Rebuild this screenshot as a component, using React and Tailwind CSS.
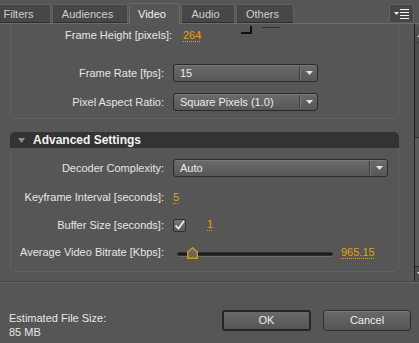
import React from 'react';

const Arrow = ({ className = '' }) => (
  <svg width="7" height="4" viewBox="0 0 7 4" className={className}>
    <polygon points="0,0 7,0 3.5,4" fill="#e4e4e4" />
  </svg>
);

const Tab = ({ label, active, w, className = '' }) => (
  <div
    className={`${w} ${className} flex items-center justify-center pr-[5px] rounded-t-[2px] border border-b-0 ${
      active
        ? 'h-[21px] -mb-px bg-[#565656] border-[#6c6c6c] text-[#f2f2f2]'
        : 'h-[19px] bg-[#474747] border-[#626262] text-[#cfcfcf] shadow-[inset_0_-1px_0_#2e2e2e]'
    }`}
  >
    {label}
  </div>
);

const Select = ({ value, w }) => (
  <div className={`${w} h-[18px] flex items-center rounded-[3px] border border-[#2a2a2a] bg-linear-to-b from-[#6b6b6b] to-[#575757] shadow-[inset_0_1px_0_#787878]`}>
    <span className="flex-1 pl-[6px] text-[#ececec]">{value}</span>
    <div className="w-[2px] h-[14px] border-l border-[#3e3e3e] border-r border-r-[#767676]" />
    <div className="w-[16px] flex justify-center">
      <Arrow />
    </div>
  </div>
);

const Row = ({ label, children }) => (
  <div className="flex items-center h-[18px]">
    <div className="w-[153px] shrink-0 text-right">{label}</div>
    <div className="ml-[9px] flex items-center">{children}</div>
  </div>
);

const Value = ({ children, className = '' }) => (
  <span className={`text-[#e2a20f] underline decoration-dotted underline-offset-[2px] ${className}`}>{children}</span>
);

export default function App() {
  return (
    <div className="w-[419px] h-[343px] overflow-hidden bg-[#565656] flex flex-col text-[11px] leading-none text-[#e6e6e6] font-[family-name:'Liberation_Sans',Arial,sans-serif]">
      {/* Tab bar */}
      <div className="h-[24px] shrink-0 flex items-end gap-[1px] border-b border-[#6c6c6c]">
        <Tab label="Filters" w="w-[60px]" className="-ml-[9px]" />
        <Tab label="Audiences" w="w-[76px]" />
        <Tab label="Video" w="w-[51px]" active />
        <Tab label="Audio" w="w-[54px]" />
        <Tab label="Others" w="w-[58px]" />
        <div className="ml-auto mr-[5px] mb-[1px] w-[25px] h-[18px] flex items-center justify-center gap-[1px] rounded-t-[2px] border border-b-0 border-[#626262] bg-[#474747]">
          <svg width="15" height="10" viewBox="0 0 15 10">
            <polygon points="0,3 5,3 2.5,6" fill="#f0f0f0" />
            <rect x="6" y="0" width="9" height="1" fill="#f0f0f0" />
            <rect x="6" y="3" width="9" height="1" fill="#f0f0f0" />
            <rect x="6" y="6" width="9" height="1" fill="#f0f0f0" />
            <rect x="6" y="9" width="9" height="1" fill="#f0f0f0" />
          </svg>
        </div>
      </div>

      {/* Content */}
      <div className="h-[258px] shrink-0 flex border-b border-[#484848]">
        <div className="w-[414px] shrink-0 pl-[10px] pr-[15px] flex flex-col">
          {/* Clipped first group */}
          <div className="border-x border-b border-[#5f5f5f] rounded-b-[5px] pt-[2px] pb-[7px] flex flex-col">
            <div className="flex items-center h-[18px]">
              <div className="w-[161px] shrink-0 text-right">Frame Height [pixels]:</div>
              <Value className="ml-[11px]">264</Value>
              <svg width="40" height="18" viewBox="0 0 40 18" className="ml-[40px] self-start">
                <path d="M0 7 H10 V0" stroke="#111" strokeWidth="2" fill="none" />
                <rect x="21" y="1" width="18" height="1" fill="#303030" />
              </svg>
            </div>
            <div className="mt-[20px]">
              <Row label="Frame Rate [fps]:">
                <Select value="15" w="w-[145px]" />
              </Row>
            </div>
            <div className="mt-[11px]">
              <Row label="Pixel Aspect Ratio:">
                <Select value="Square Pixels (1.0)" w="w-[145px]" />
              </Row>
            </div>
          </div>

          {/* Advanced Settings */}
          <div className="mt-[13px] flex flex-col">
            <div className="h-[16px] bg-[#333333] rounded-t-[5px] flex items-center pl-[8px]">
              <svg width="7" height="5" viewBox="0 0 7 5">
                <polygon points="0,0 7,0 3.5,5" fill="#8e8e8e" />
              </svg>
              <span className="ml-[8px] text-[12px] font-bold text-[#f2f2f2]">Advanced Settings</span>
            </div>
            <div className="border-x border-b border-[#5f5f5f] rounded-b-[5px] pt-[11px] pb-[10px] flex flex-col">
              <Row label="Decoder Complexity:">
                <Select value="Auto" w="w-[215px]" />
              </Row>
              <div className="mt-[11px]">
                <Row label="Keyframe Interval [seconds]:">
                  <Value>5</Value>
                </Row>
              </div>
              <div className="mt-[10px]">
                <Row label="Buffer Size [seconds]:">
                  <div className="w-[13px] h-[13px] flex items-center justify-center rounded-[2px] border border-[#303030] bg-linear-to-b from-[#747474] to-[#5c5c5c]">
                    <svg width="11" height="11" viewBox="0 0 11 11">
                      <path d="M1.5 5.5 L4.5 8.5 L10 1" stroke="#f2f2f2" strokeWidth="1.7" fill="none" />
                    </svg>
                  </div>
                  <Value className="ml-[21px] -mt-[2px] text-[#c99a1a]">1</Value>
                </Row>
              </div>
              <div className="mt-[9px]">
                <Row label="Average Video Bitrate [Kbps]:">
                  <div className="relative w-[164px] h-[18px]">
                    <div className="absolute left-[4px] top-[9px] w-[156px] h-[4px] rounded-full bg-[#1c1c1c] border border-[#2f2f2f] shadow-[0_1px_0_#6c6c6c]" />
                    <svg width="11" height="12" viewBox="0 0 11 12" className="absolute left-[14px] top-[4px]">
                      <polygon points="5.5,0.8 10.3,5 10.3,11.3 0.7,11.3 0.7,5" fill="#666666" stroke="#d39a12" strokeWidth="1.4" />
                    </svg>
                  </div>
                  <Value className="ml-[4px]">965.15</Value>
                </Row>
              </div>
            </div>
          </div>
        </div>

        {/* Scrollbar (partly visible) */}
        <div className="w-[16px] shrink-0 border-l border-[#222] flex flex-col pt-[3px]">
          <div className="h-[16px] border-b border-[#3a3a3a] bg-[#4e4e4e] flex items-center pl-[2px]">
            <svg width="7" height="4" viewBox="0 0 7 4">
              <polygon points="0,4 7,4 3.5,0" fill="#d0d0d0" />
            </svg>
          </div>
          <div className="h-[94px] bg-[#4c4c4c]" />
          <div className="h-[130px] bg-[#5a5a5a] border-y border-[#2a2a2a]" />
          <div className="flex-1 bg-[#4e4e4e] flex items-center pl-[2px]">
            <Arrow />
          </div>
        </div>
      </div>

      {/* Bottom */}
      <div className="flex-1 flex border-t border-[#636363]">
        <div className="pl-[9px] pt-[28px] leading-[14px] text-[#e6e6e6]">
          <div>Estimated File Size:</div>
          <div>85 MB</div>
        </div>
        <div className="ml-auto pr-[8px] pt-[27px] flex gap-[12px]">
          <button className="w-[89px] h-[21px] rounded-[3px] border-2 border-[#252525] bg-linear-to-b from-[#696969] to-[#555555] text-[#ececec]">
            OK
          </button>
          <button className="w-[88px] h-[21px] rounded-[3px] border border-[#2e2e2e] bg-linear-to-b from-[#696969] to-[#555555] shadow-[inset_0_1px_0_#7a7a7a] text-[#ececec]">
            Cancel
          </button>
        </div>
      </div>
    </div>
  );
}
